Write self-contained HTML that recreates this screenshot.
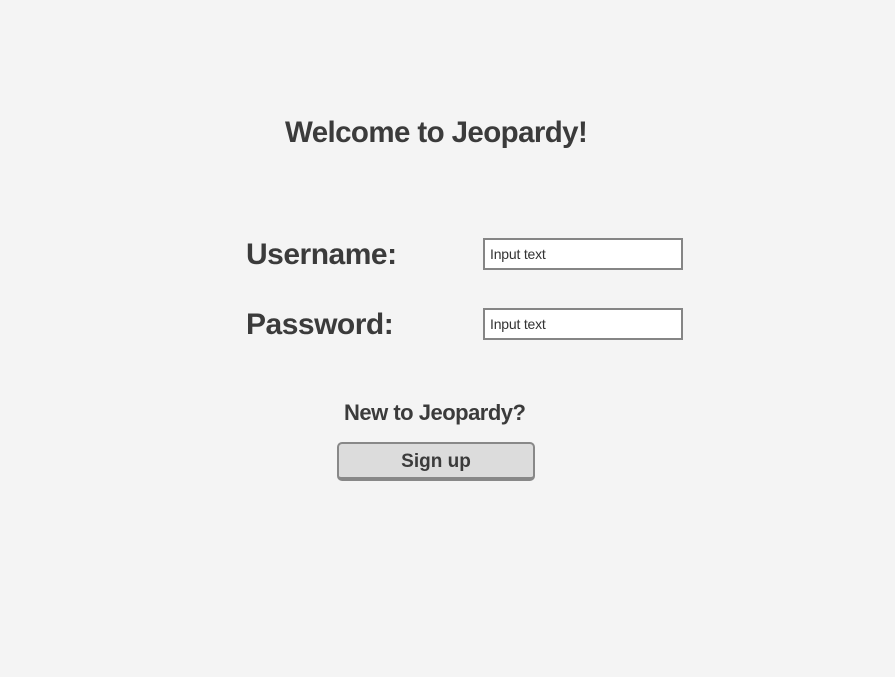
<!DOCTYPE html>
<html><head><style>
html,body{margin:0;padding:0;background:#f4f4f4;width:895px;height:677px;overflow:hidden}
body{font-family:"Liberation Sans",sans-serif;color:#3b3b3b;position:relative}
.t{position:absolute;font-weight:bold;white-space:nowrap;letter-spacing:-0.5px}
.in{position:absolute;left:483px;width:196px;height:28px;border:2px solid #858585;background:#fff;box-sizing:content-box}
.in span{position:absolute;left:5px;top:6px;font-size:14px;color:#333;letter-spacing:-0.2px}
.btn{position:absolute;left:337px;top:442px;width:194px;height:33px;background:#dcdcdc;border:2px solid #888;border-bottom-width:4px;border-radius:5px;text-align:center;font-weight:bold;font-size:19px;line-height:36px;color:#3b3b3b}
</style></head><body>
<div class="t" style="left:285px;top:116px;font-size:29.5px;letter-spacing:-0.6px">Welcome to Jeopardy!</div>
<div class="t" style="left:246px;top:238px;font-size:30px">Username:</div>
<div class="t" style="left:246px;top:308px;font-size:30px">Password:</div>
<div class="in" style="top:238px"><span>Input text</span></div>
<div class="in" style="top:308px"><span>Input text</span></div>
<div class="t" style="left:344px;top:400px;font-size:22px">New to Jeopardy?</div>
<div class="btn">Sign up</div>
</body></html>
